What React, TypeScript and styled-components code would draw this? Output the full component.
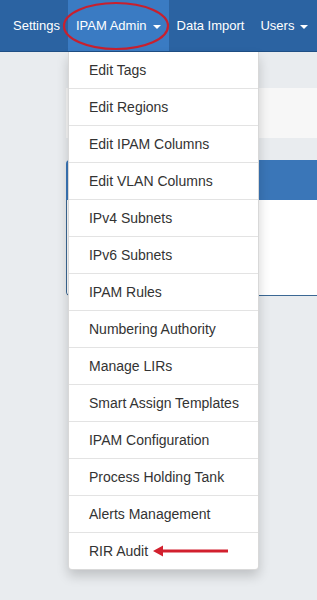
import * as React from 'react';
import styled, {createGlobalStyle} from "styled-components";

const GlobalStyle = createGlobalStyle`
  body {
    margin: 0;
    background: #e9ecef;
    font-family: "Liberation Sans", Arial, sans-serif;
    color: #333;
  }
`;

const Page = styled.div`
  width: 317px;
  height: 600px;
  overflow: hidden;
  background: #e9ecef;
`;

const NavBar = styled.div`
  display: flex;
  align-items: stretch;
  height: 51px;
  padding-left: 5px;
  background: #2b63a2;
  border-bottom: 1px solid #1f4f85;
  white-space: nowrap;
`;

const NavItem = styled.div<{ $active?: boolean }>`
  position: relative;
  display: flex;
  align-items: center;
  padding: 0 8px 0 8px;
  font-size: 13px;
  color: #fff;
  background: ${p => (p.$active ? '#3a7bc3' : 'transparent')};
`;

const Caret = styled.span`
  display: inline-block;
  margin-left: 6px;
  margin-top: 2px;
  border-top: 4px solid #fff;
  border-left: 4px solid transparent;
  border-right: 4px solid transparent;
`;

const Highlight = styled.svg`
  position: absolute;
  left: -6px;
  top: 1px;
  pointer-events: none;
`;

const Dropdown = styled.ul`
  position: absolute;
  left: 0;
  top: 52px;
  z-index: 5;
  width: 189px;
  margin: 0;
  padding: 0;
  list-style: none;
  background: #fff;
  border: 1px solid rgba(0, 0, 0, 0.15);
  border-top: none;
  border-radius: 0 0 4px 4px;
  box-shadow: 0 6px 12px rgba(0, 0, 0, 0.18);
`;

const DropdownItem = styled.li`
  display: flex;
  align-items: center;
  height: 36px;
  padding-left: 20px;
  font-size: 14px;
  color: #333;
  & + & {
    border-top: 1px solid #e3e3e3;
  }
`;

const Arrow = styled.svg`
  margin-left: 5px;
`;

const Content = styled.div`
  padding: 36px 0 0 66px;
`;

const Breadcrumb = styled.div`
  height: 50px;
  background: #f7f7f7;
  margin-bottom: 22px;
`;

const Panel = styled.div`
  border-radius: 4px 0 0 4px;
  overflow: hidden;
`;

const PanelHeading = styled.div`
  height: 40px;
  background: #3a76b8;
`;

const PanelBody = styled.div`
  height: 95px;
  background: #fff;
  border-left: 1px solid #3b6894;
  border-bottom: 1px solid #3b6894;
  border-radius: 0 0 0 4px;
`;

const menuItems = [
    'Edit Tags',
    'Edit Regions',
    'Edit IPAM Columns',
    'Edit VLAN Columns',
    'IPv4 Subnets',
    'IPv6 Subnets',
    'IPAM Rules',
    'Numbering Authority',
    'Manage LIRs',
    'Smart Assign Templates',
    'IPAM Configuration',
    'Process Holding Tank',
    'Alerts Management',
    'RIR Audit',
];

const App = () => (
    <Page>
        <GlobalStyle/>
        <NavBar>
            <NavItem>Settings</NavItem>
            <NavItem $active>
                IPAM Admin<Caret/>
                <Highlight width="112" height="50" viewBox="0 0 112 50">
                    <ellipse cx="54" cy="25" rx="52" ry="23" fill="none" stroke="#c8202e" strokeWidth="2.2"/>
                </Highlight>
                <Dropdown>
                    {menuItems.map(item => (
                        <DropdownItem key={item}>
                            {item}
                            {item === 'RIR Audit' && (
                                <Arrow width="76" height="12" viewBox="0 0 76 12">
                                    <path d="M0 6 L10 0.5 L10 4.5 L75 4.5 L75 7.5 L10 7.5 L10 11.5 Z" fill="#d2202e"/>
                                </Arrow>
                            )}
                        </DropdownItem>
                    ))}
                </Dropdown>
            </NavItem>
            <NavItem>Data Import</NavItem>
            <NavItem>Users<Caret/></NavItem>
        </NavBar>
        <Content>
            <Breadcrumb/>
            <Panel>
                <PanelHeading/>
                <PanelBody/>
            </Panel>
        </Content>
    </Page>
);

export default App;
